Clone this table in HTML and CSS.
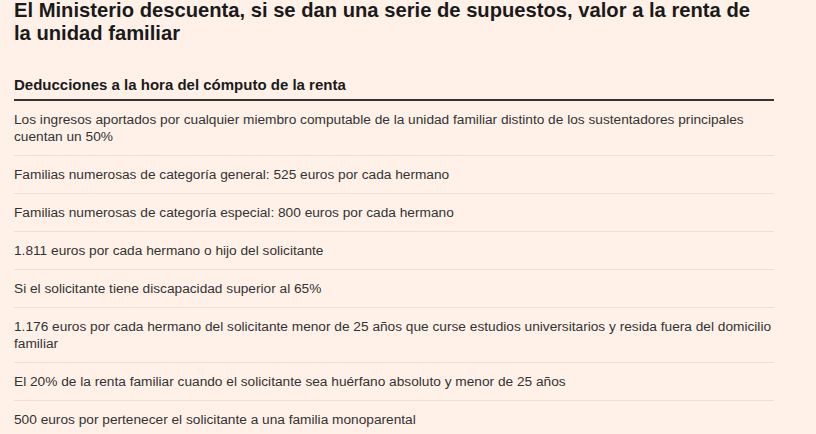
FILE: index.html
```html
<!DOCTYPE html>
<html lang="es">
<head>
<meta charset="utf-8">
<link rel="stylesheet" href="styles.css">
</head>
<body>
<main class="page">
  <h1 class="title">El Ministerio descuenta, si se dan una serie de supuestos, valor a la renta de la unidad familiar</h1>
  <section class="table">
    <h2 class="table-head">Deducciones a la hora del cómputo de la renta</h2>
    <ul class="rows">
      <li class="row">Los ingresos aportados por cualquier miembro computable de la unidad familiar distinto de los sustentadores principales cuentan un 50%</li>
      <li class="row">Familias numerosas de categoría general: 525 euros por cada hermano</li>
      <li class="row">Familias numerosas de categoría especial: 800 euros por cada hermano</li>
      <li class="row">1.811 euros por cada hermano o hijo del solicitante</li>
      <li class="row">Si el solicitante tiene discapacidad superior al 65%</li>
      <li class="row">1.176 euros por cada hermano del solicitante menor de 25 años que curse estudios universitarios y resida fuera del domicilio familiar</li>
      <li class="row">El 20% de la renta familiar cuando el solicitante sea huérfano absoluto y menor de 25 años</li>
      <li class="row">500 euros por pertenecer el solicitante a una familia monoparental</li>
    </ul>
  </section>
</main>
</body>
</html>
```

FILE: styles.css
```css
html, body {
  margin: 0;
  padding: 0;
  background: #fff1e8;
}
body {
  overflow: hidden;
}
.page {
  width: 760px;
  padding: 0 14px;
  font-family: "Liberation Sans", Arial, sans-serif;
  color: #1a1a1a;
}
.title {
  max-width: 750px;
  margin: -1px 0 0 0;
  font-family: "Liberation Sans", Arial, sans-serif;
  font-weight: 700;
  font-size: 20.2px;
  line-height: 23px;
  color: #1a1a1a;
}
.table {
  margin-top: 31px;
}
.table-head {
  margin: 0;
  padding-bottom: 6px;
  font-family: "Liberation Sans", Arial, sans-serif;
  font-weight: 700;
  font-size: 15px;
  line-height: 17px;
  border-bottom: 2px solid #333;
  color: #1a1a1a;
}
.rows {
  list-style: none;
  margin: 0;
  padding: 0;
}
.row {
  padding: 10px 0;
  font-size: 13.7px;
  line-height: 17px;
  color: #333;
  border-bottom: 1px solid #eadfd6;
}
```
